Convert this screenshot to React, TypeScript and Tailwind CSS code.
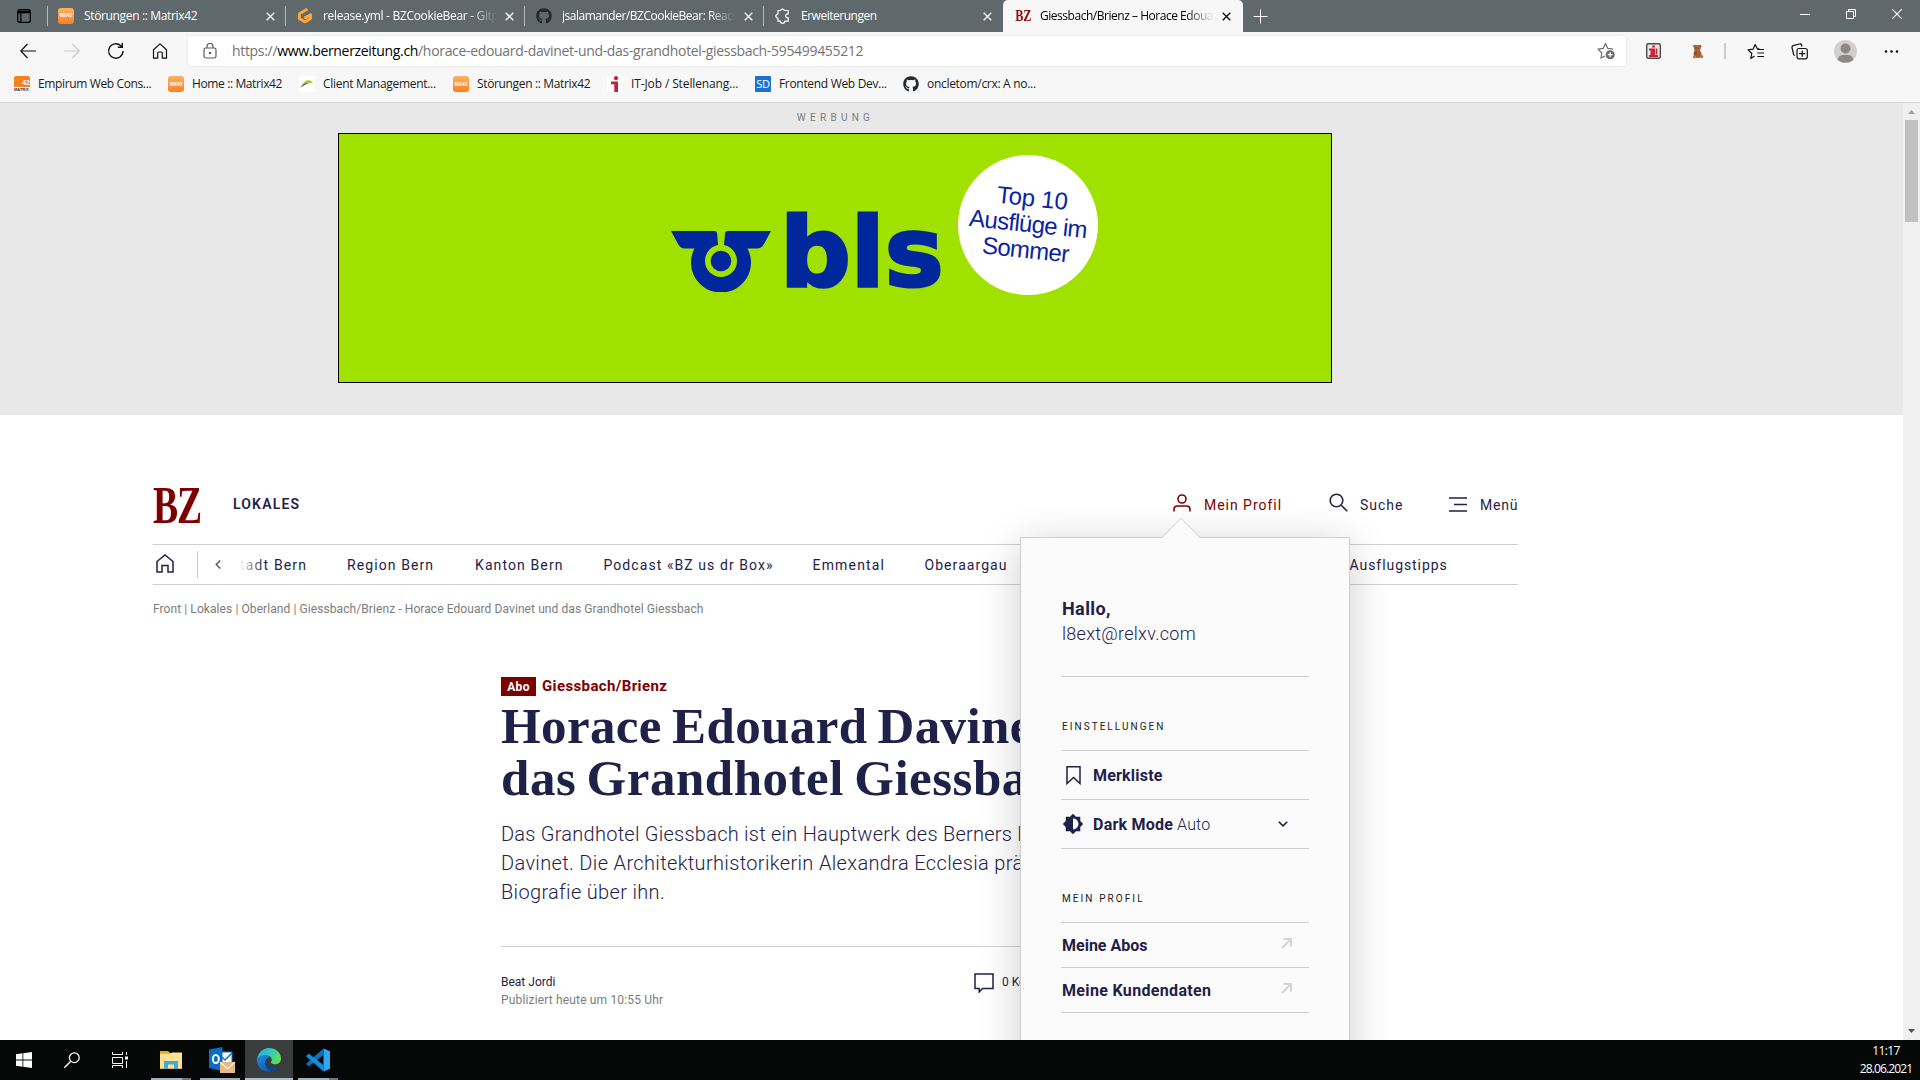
import type { ReactNode } from "react";
import { FaGithub } from "react-icons/fa";

const NAVY = "#1f2149";

/* ---------- small logos ---------- */

function MatrixIcon() {
  return (
    <span className="flex h-4 w-4 shrink-0 items-center justify-center overflow-hidden rounded-[3px] bg-gradient-to-b from-[#fbb161] to-[#f97f1c] font-['Liberation_Sans',sans-serif] text-[5px] font-bold tracking-[-0.1px] text-white">
      MX42
    </span>
  );
}

function EmpirumIcon() {
  return (
    <span className="flex h-4 w-4 shrink-0 flex-col overflow-hidden bg-white font-['Liberation_Sans',sans-serif] font-bold">
      <span className="flex h-[11px] items-end justify-end rounded-t-[2px] bg-[#f58220] text-[7px] leading-[8px] tracking-normal text-white">42</span>
      <span className="text-[4px] leading-[5px] tracking-normal text-[#333]">MATRIX</span>
    </span>
  );
}

function ClientIcon() {
  return (
    <svg className="h-4 w-4 shrink-0" viewBox="0 0 16 16">
      <rect width="16" height="16" fill="#fff" />
      <path d="M3 9.500C4.500 6 7 4 9.500 4.200C12 4.400 13.300 5.700 14 7.500C12 6.800 10 7 8.200 8z" fill="#9bc93c" />
      <path d="M1.500 11.500C3 8.500 6.500 6.800 9 7.300C7 8.200 4.500 9.800 1.500 11.500z" fill="#555" />
    </svg>
  );
}

function RedIIcon() {
  return (
    <svg className="h-4 w-4 shrink-0" viewBox="0 0 16 16">
      <rect width="16" height="16" fill="#fff" />
      <circle cx="9" cy="2.200" r="2.100" fill="#c8203c" />
      <path d="M4 5.500h7V16H7.300V8.200H4z" fill="#c8203c" />
    </svg>
  );
}

function SdIcon() {
  return (
    <span className="flex h-4 w-4 shrink-0 items-center justify-center rounded-[1px] bg-[#1a73d4] font-['Open_Sans',sans-serif] text-[11px] tracking-[-0.3px] text-white">
      SD
    </span>
  );
}

function GitpodIcon() {
  return (
    <svg className="h-4 w-4 shrink-0" viewBox="0 0 16 16" fill="none" stroke="#ffa63b" strokeWidth="3" strokeLinecap="round" strokeLinejoin="round">
      <path d="M9.300 1.800L3.200 5.200Q2.300 5.800 2.300 6.800V9.700Q2.300 10.500 3 11L7.300 13.500Q8 13.900 8.700 13.500L12.800 11Q13.600 10.500 13.600 9.700V6.700L8.400 9.600" />
    </svg>
  );
}

function PuzzleIcon() {
  return (
    <svg className="h-4 w-4 shrink-0" viewBox="0 0 16 16" fill="none" stroke="#fff" strokeWidth="1.200" strokeLinejoin="round">
      <path d="M3 2.500H5.500A2.100 2.100 0 0 1 9.500 2.500H13.200V6A1.950 1.950 0 1 0 13.200 9.700V13.200H9.700A2.100 2.100 0 0 1 5.500 13.200H3V10.200A2.100 2.100 0 0 1 3 6z" />
    </svg>
  );
}

function BzMark({ small }: { small?: boolean }) {
  return small ? (
    <span className="flex h-4 w-4 shrink-0 items-center justify-center">
      <span className="scale-x-[0.72] font-['Liberation_Serif',serif] text-[17px] leading-4 font-bold text-[#8a0d10]">BZ</span>
    </span>
  ) : (
    <span className="flex h-[54px] w-[48px] shrink-0 items-center">
      <span className="origin-left scale-x-[0.710] font-['Liberation_Serif',serif] text-[53px] leading-[54px] font-bold tracking-[-1.500px] text-[#7d0000]">BZ</span>
    </span>
  );
}

function CloseX({ dark }: { dark?: boolean }) {
  return (
    <svg className="h-[9px] w-[9px] shrink-0" viewBox="0 0 9 9" stroke={dark ? "#000" : "#fff"} strokeWidth="1.300">
      <path d="M0.700 0.700L8.300 8.300M8.300 0.700L0.700 8.300" />
    </svg>
  );
}

/* ---------- browser chrome ---------- */

function Tab({ icon, title, track, active, fade }: { icon: ReactNode; title: string; track: string; active?: boolean; fade?: boolean }) {
  return (
    <div
      className={`flex h-8 shrink-0 items-center ${
        active ? "w-[240px] rounded-t-[5px] bg-[#f7f7f7] pr-[12px] pl-[12px] text-black" : "w-[239px] border-l border-transparent pr-[11px] pl-[10px] text-white"
      }`}
    >
      {icon}
      <span
        className={`w-[174px] overflow-hidden text-[12px] leading-4 whitespace-nowrap ${active ? "ml-[9px]" : "ml-[10px]"} ${track} ${
          fade ? "[mask-image:linear-gradient(to_right,#000_84%,transparent)]" : ""
        }`}
      >
        {title}
      </span>
      <span className="ml-auto flex">
        <CloseX dark={active} />
      </span>
    </div>
  );
}

function TabBar() {
  const sep = <span className="-ml-px h-5 w-px shrink-0 bg-[#b4b9bb]" />;
  return (
    <div className="flex h-8 items-center bg-[#5f686b]">
      <div className="flex h-8 w-[47px] shrink-0 items-center justify-center">
        <svg className="h-[14px] w-[14px]" viewBox="0 0 14 14" fill="none" stroke="#000" strokeWidth="1.200">
          <rect x="0.700" y="0.700" width="12.600" height="12.600" rx="2" />
          <path d="M1 3H13" strokeWidth="2.600" />
          <path d="M3.800 3V13" />
        </svg>
      </div>
      <span className="-mr-px h-5 w-px shrink-0 bg-[#b4b9bb]" />
      <Tab icon={<MatrixIcon />} title="Störungen :: Matrix42" track="tracking-[-0.35px]" />
      {sep}
      <Tab icon={<GitpodIcon />} title="release.yml - BZCookieBear - Gitpod" track="tracking-[-0.32px]" fade />
      {sep}
      <Tab icon={<FaGithub className="h-4 w-4 shrink-0 text-[#24292e]" />} title="jsalamander/BZCookieBear: React" track="tracking-[-0.49px]" fade />
      {sep}
      <Tab icon={<PuzzleIcon />} title="Erweiterungen" track="tracking-[-0.49px]" />
      <Tab icon={<BzMark small />} title="Giessbach/Brienz – Horace Edouard" track="tracking-[-0.47px]" active fade />
      <svg className="ml-[10px] h-[15px] w-[15px] shrink-0" viewBox="0 0 15 15" stroke="#fff" strokeWidth="1">
        <path d="M7.500 0.500V14.500M0.500 7.500H14.500" />
      </svg>
      <div className="mr-[18px] mb-1 ml-auto flex items-center gap-[36px]">
        <span className="h-px w-[10px] bg-white" />
        <svg className="h-[10px] w-[10px]" viewBox="0 0 10 10" fill="none" stroke="#fff">
          <path d="M0.500 2.500H7.500V9.500H0.500zM2.500 2.500V0.500H9.500V7.500H7.500" />
        </svg>
        <svg className="h-[10px] w-[10px]" viewBox="0 0 10 10" stroke="#fff" strokeWidth="1.100">
          <path d="M0 0L10 10M10 0L0 10" />
        </svg>
      </div>
    </div>
  );
}

function Toolbar() {
  return (
    <div className="flex h-[38px] shrink-0 items-center">
      <div className="flex w-[188px] items-center pl-5">
        <svg className="h-4 w-4" viewBox="0 0 16 16" fill="none" stroke="#111" strokeWidth="1.200">
          <path d="M7.500 1L0.800 8L7.500 15M0.800 8H16" />
        </svg>
        <svg className="ml-7 h-4 w-4" viewBox="0 0 16 16" fill="none" stroke="#c9c9c9" strokeWidth="1.200">
          <path d="M8.500 1L15.200 8L8.500 15M15.200 8H0" />
        </svg>
        <svg className="ml-[27px] h-[18px] w-[18px]" viewBox="0 0 18 18" fill="none" stroke="#111" strokeWidth="1.400">
          <path d="M16 9A7.200 7.200 0 1 1 13.800 3.800L15 5M15.300 0.800V5.300H10.800" />
        </svg>
        <svg className="ml-[27px] h-4 w-4" viewBox="0 0 16 16" fill="none" stroke="#111" strokeWidth="1.200" strokeLinejoin="round">
          <path d="M1.500 6.800L8 0.900L14.500 6.800V15.200H10.300V10Q10.300 9 9.300 9H6.700Q5.700 9 5.700 10V15.200H1.500z" />
        </svg>
      </div>
      <div className="flex h-[30px] w-[1438px] shrink-0 items-center rounded-[3px] bg-white pr-[11px] pl-[15px] shadow-[0_0_3px_rgba(0,0,0,0.10)]">
        <svg className="h-4 w-[14px] shrink-0" viewBox="0 0 14 16" fill="none" stroke="#5c5c5c" strokeWidth="1.200">
          <rect x="1" y="5" width="12" height="10" rx="1.800" />
          <path d="M4 5V3.500A3 3 0 0 1 10 3.500V5" />
          <circle cx="7" cy="10" r="0.700" fill="#5c5c5c" />
        </svg>
        <span className="mb-px ml-[15px] text-[14px] tracking-[-0.320px] whitespace-nowrap text-[#737373]">
          https://<span className="text-black">www.bernerzeitung.ch</span>/horace-edouard-davinet-und-das-grandhotel-giessbach-595499455212
        </span>
        <svg className="ml-auto h-[18px] w-[18px] shrink-0" viewBox="0 0 18 18" fill="none" stroke="#6b6b6b" strokeWidth="1.200" strokeLinejoin="round">
          <path d="M8 14L4 16L4.800 11L1 7.200L6.200 6.400L8.500 1.500L10.800 6.400L16 7.200" />
          <circle cx="13.200" cy="12.700" r="4.500" fill="#6b6b6b" stroke="none" />
          <path d="M13.200 10.200V15.200M10.700 12.700H15.700" stroke="#fff" strokeWidth="1.300" />
        </svg>
      </div>
      <div className="flex flex-1 items-center pl-5">
        <svg className="h-4 w-[15px]" viewBox="0 0 15 16">
          <rect x="0.700" y="0.700" width="13.600" height="14.600" rx="1.500" fill="#e8e8e8" stroke="#4a4a4a" strokeWidth="1.400" />
          <path d="M6.200 2.500H9V4.500H6.200zM3 5.500H9V12H12V14H3V12H4.500V7.500H3zM9.800 5.500H11.300V11.500H9.800z" fill="#cf2233" />
        </svg>
        <svg className="ml-[31px] h-[15px] w-[12px]" viewBox="0 0 12 15">
          <circle cx="2.800" cy="2.200" r="1.500" fill="#8f5530" />
          <circle cx="7.800" cy="2.200" r="1.500" fill="#8f5530" />
          <circle cx="5.300" cy="4.400" r="3.300" fill="#b06335" />
          <path d="M1.500 9Q2 6 5 6.500Q9.500 6 9.500 10Q9.800 14 6 14Q1.200 14 1.500 9z" fill="#a85c30" />
          <circle cx="4" cy="4" r="0.600" fill="#333" />
          <circle cx="6.800" cy="4" r="0.600" fill="#333" />
          <circle cx="3.600" cy="9" r="1.700" fill="#85581f" />
          <circle cx="2.400" cy="13" r="1.500" fill="#c27a52" />
          <circle cx="9.600" cy="12.600" r="1.700" fill="#b96f48" />
        </svg>
        <span className="ml-[20px] h-4 w-[2px] bg-[#cfcfcf]" />
        <svg className="ml-[21px] h-[17px] w-[17px]" viewBox="0 0 17 17" fill="none" stroke="#111" strokeWidth="1.200" strokeLinejoin="round">
          <path d="M7.500 13L3.800 15.500L4.800 10.500L1 6.800L6 6.200L8.200 1.500L10.300 5.800H12.500M10.300 6.500H17M10.300 10H17M10.300 13.500H17" />
        </svg>
        <svg className="ml-[27px] h-[17px] w-[17px]" viewBox="0 0 17 17" fill="none" stroke="#111" strokeWidth="1.200">
          <path d="M3.800 12.500Q2.800 12.300 2.500 11L1 4.500Q0.700 3 2.200 2.600L8.500 1Q10.200 0.700 10.600 2L11 3.500" />
          <rect x="6" y="5.500" width="10.300" height="10.300" rx="2" />
          <path d="M11.200 7.500V13.800M8 10.700H14.300" />
        </svg>
        <svg className="ml-[26px] h-[23px] w-[23px]" viewBox="0 0 23 23">
          <clipPath id="avatarClip"><circle cx="11.500" cy="11.500" r="11.500" /></clipPath>
          <g clipPath="url(#avatarClip)">
            <rect width="23" height="23" fill="#d2d0ce" />
            <circle cx="11.500" cy="8.500" r="5" fill="#8d8883" />
            <path d="M3.500 20Q4 14.800 11.500 14.800Q19 14.800 19.500 20L15 22.500H8z" fill="#8d8883" />
          </g>
        </svg>
        <svg className="ml-[27px] h-[3px] w-[15px]" viewBox="0 0 15 3" fill="#111">
          <circle cx="2" cy="1.500" r="1.300" /><circle cx="7.500" cy="1.500" r="1.300" /><circle cx="13" cy="1.500" r="1.300" />
        </svg>
      </div>
    </div>
  );
}

function Bookmark({ icon, label, cls }: { icon: ReactNode; label: string; cls: string }) {
  return (
    <div className={`flex shrink-0 items-center gap-2 whitespace-nowrap ${cls}`}>
      {icon}
      {label}
    </div>
  );
}

function Bookmarks() {
  return (
    <div className="flex h-[33px] items-center border-b border-[#d3d3d3] pb-1 pl-[14px] text-[12px] leading-4 text-[#1b1b1b]">
      <Bookmark cls="w-[154px] tracking-[-0.370px]" icon={<EmpirumIcon />} label="Empirum Web Cons..." />
      <Bookmark cls="w-[131px] tracking-[-0.380px]" icon={<MatrixIcon />} label="Home :: Matrix42" />
      <Bookmark cls="w-[154px] tracking-[-0.300px]" icon={<ClientIcon />} label="Client Management..." />
      <Bookmark cls="w-[154px] tracking-[-0.350px]" icon={<MatrixIcon />} label="Störungen :: Matrix42" />
      <Bookmark cls="w-[148px] tracking-[-0.120px]" icon={<RedIIcon />} label="IT-Job / Stellenang..." />
      <Bookmark cls="w-[148px] tracking-[-0.320px]" icon={<SdIcon />} label="Frontend Web Dev..." />
      <Bookmark cls="tracking-[-0.300px]" icon={<FaGithub className="h-4 w-4 text-[#24292e]" />} label="oncletom/crx: A no..." />
    </div>
  );
}

/* ---------- advertisement ---------- */

function Advert() {
  return (
    <div className="flex h-[312px] flex-col bg-[#e8e8e8] pl-[338px]">
      <div className="flex h-[30px] w-[994px] items-center justify-center pr-px pb-px pl-[2px] text-[10px] tracking-[4.270px] text-[#7c7c7c]">WERBUNG</div>
      <div className="relative h-[250px] w-[994px] border border-black bg-[#a1e100]">
        <svg className="absolute top-[97px] left-[332px] h-[61px] w-[102px]" viewBox="0 0 102 61" fill="#00289c">
          <path d="M0 0H43Q46 0 46.200 3L47 14A16 16 0 0 0 34 30A16 16 0 0 0 66 30A16 16 0 0 0 53 14L54 3Q54.200 0 57 0H100L93 13Q90.500 17.500 86 17.500H76.500A30 30 0 1 1 23.500 17.500H14Q9.500 17.500 7 13z" />
          <circle cx="50" cy="30" r="10.300" />
        </svg>
        <span className="absolute top-[60px] left-[441px] origin-left scale-x-[1.030] font-['DejaVu_Sans',sans-serif] text-[96px] leading-[118px] font-bold text-[#00289c] [-webkit-text-stroke:3px_#00289c]">bls</span>
        <div className="absolute top-[21px] left-[619px] flex h-[140px] w-[140px] items-center justify-center rounded-full bg-white">
          <p className="mb-[3px] rotate-[6deg] text-center font-['Liberation_Sans',sans-serif] text-[24px] leading-[26px] tracking-[-0.650px] whitespace-nowrap text-[#0a24a0]">
            <span className="pl-[3px] tracking-[-0.200px]">Top 10</span>
            <br />
            Ausflüge im
            <br />
            Sommer
          </p>
        </div>
      </div>
    </div>
  );
}

/* ---------- site header ---------- */

function SiteHeader() {
  return (
    <div className="ml-[153px] w-[1365px]">
      <div className="flex h-[129px] items-center pt-[50px] text-[14px] text-[#1f2149]">
        <BzMark />
        <span className="ml-[32px] font-semibold tracking-[1.170px]">LOKALES</span>
        <div className="ml-auto flex items-center">
          <svg className="mb-[3px] h-[18px] w-[18px]" viewBox="0 0 18 18" fill="none" stroke="#7d0000" strokeWidth="1.600">
            <circle cx="9" cy="5" r="4" />
            <path d="M1 17.500V15.500Q1 12 4.500 12H13.500Q17 12 17 15.500V17.500" />
          </svg>
          <span className="ml-[13px] w-[125px] pt-px tracking-[0.970px] text-[#7d0000]">Mein Profil</span>
          <svg className="mb-[5px] h-[19px] w-[19px]" viewBox="0 0 19 19" fill="none" stroke={NAVY} strokeWidth="1.600">
            <circle cx="7.500" cy="7.500" r="6.300" />
            <path d="M12 12L18.300 18.300" />
          </svg>
          <span className="ml-[12px] w-[89px] pt-px tracking-[1px]">Suche</span>
          <svg className="h-[15px] w-[18px]" viewBox="0 0 18 15" stroke={NAVY} strokeWidth="1.500">
            <path d="M0 1H18M5 7.500H18M0 14H18" />
          </svg>
          <span className="ml-[13px] w-[38px] pt-px tracking-[0.800px]">Menü</span>
        </div>
      </div>
      <div className="flex h-[41px] items-center overflow-hidden border-y border-[#cfcfcf] text-[14px] whitespace-nowrap text-[#1f2149]">
        <svg className="mb-[3px] ml-[3px] h-[19px] w-[18px] shrink-0" viewBox="0 0 18 19" fill="none" stroke={NAVY} strokeWidth="1.500">
          <path d="M1 7.500L9 1L17 7.500V18H12V11.500H6V18H1z" />
        </svg>
        <span className="ml-[23px] h-[27px] w-px shrink-0 bg-[#cfcfcf]" />
        <svg className="ml-[17px] h-[9px] w-[6px] shrink-0" viewBox="0 0 6 9" fill="none" stroke="#555" strokeWidth="1.400">
          <path d="M5.300 0.500L1.200 4.500L5.300 8.500" />
        </svg>
        <div className="ml-[19px] flex pt-[2px]">
          <span className="w-[107px] shrink-0 tracking-[1.150px]">
            <span className="bg-gradient-to-r from-white to-[#1f2149] bg-clip-text text-transparent">tad</span>t Bern
          </span>
          <span className="w-[128px] shrink-0 tracking-[1.090px]">Region Bern</span>
          <span className="w-[128.500px] shrink-0 tracking-[1.110px]">Kanton Bern</span>
          <span className="w-[209px] shrink-0 tracking-[1.070px]">Podcast «BZ us dr Box»</span>
          <span className="w-[112px] shrink-0 tracking-[1.180px]">Emmental</span>
          <span className="w-[425px] shrink-0 tracking-[1.060px]">Oberaargau</span>
          <span className="shrink-0 tracking-[0.940px]">Ausflugstipps</span>
        </div>
      </div>
      <div className="pt-[16px] text-[12px] leading-4 tracking-[0.083px] text-[#7c7c7c]">
        Front | Lokales | Oberland | Giessbach/Brienz - Horace Edouard Davinet und das Grandhotel Giessbach
      </div>
    </div>
  );
}

function Article() {
  return (
    <div className="ml-[501px] w-[834px] text-[#1f2149]">
      <div className="flex h-[19px] items-stretch">
        <span className="flex w-[35px] items-center justify-center bg-[#7d0000] text-[12px] font-bold tracking-[0.350px] text-white">Abo</span>
        <span className="ml-[6px] text-[15px] leading-[18px] font-bold tracking-[0.380px] text-[#7d0000]">Giessbach/Brienz</span>
      </div>
      <h1 className="mt-[4px] font-['Liberation_Serif',serif] text-[51px] leading-[52px] font-bold whitespace-nowrap">
        <span className="tracking-[0.380px] [word-spacing:-3px]">Horace Edouard Davinet und</span>
        <br />
        <span className="tracking-[0.520px] [word-spacing:-3px]">das Grandhotel Giessbach</span>
      </h1>
      <p className="mt-[16px] text-[20px] leading-[29px] font-light whitespace-nowrap">
        <span className="tracking-[0.250px]">Das Grandhotel Giessbach ist ein Hauptwerk des Berners Horace Edouard</span>
        <br />
        <span className="tracking-[0.350px]">Davinet. Die Architekturhistorikerin Alexandra Ecclesia präsentiert eine</span>
        <br />
        <span className="tracking-[0.330px]">Biografie über ihn.</span>
      </p>
      <div className="mt-[39px] flex border-t border-[#cfcfcf] pt-[26px] text-[12px] leading-[18px]">
        <div className="w-[473px]">
          <p>Beat Jordi</p>
          <p className="tracking-[0.160px] text-[#7c7c7c]">Publiziert heute um 10:55 Uhr</p>
        </div>
        <svg className="h-[20px] w-[20px]" viewBox="0 0 20 20" fill="none" stroke={NAVY} strokeWidth="1.500">
          <path d="M1 1H19V15.500H8.500L5.200 19V15.500H1z" />
        </svg>
        <span className="ml-[8px]">0 Kommentare</span>
      </div>
    </div>
  );
}

/* ---------- profile flyout ---------- */

function LinkArrow() {
  return (
    <svg className="mr-[17px] mb-[3px] ml-auto h-[11px] w-[11px]" viewBox="0 0 11 11" fill="none" stroke="#d3d3d3" strokeWidth="1.900">
      <path d="M1 10L9.500 1.500M2.500 1H10V8.500" />
    </svg>
  );
}

function Flyout() {
  return (
    <div className="absolute top-[434px] left-[1020px] h-[560px] w-[330px] border border-[#cfcfcf] bg-[#fbfbfb] px-[40px] pt-[58px] text-[#1f2149] shadow-[0_8px_40px_rgba(0,0,0,0.2)]">
      <svg className="absolute -top-[21px] left-[140px] h-[22px] w-[40px]" viewBox="0 0 40 22">
        <path d="M0.500 21L20 1.200L39.500 21V22H0.500z" fill="#fbfbfb" />
        <path d="M0.500 21L20 1.200L39.500 21" fill="none" stroke="#cfcfcf" />
      </svg>
      <div className="h-[81px] border-b border-[#cfcfcf] pl-px text-[18px] leading-[25px]">
        <p className="font-bold tracking-[0.410px]">Hallo,</p>
        <p className="font-light tracking-[0.280px]">l8ext@relxv.com</p>
      </div>
      <p className="mt-[42px] h-[32px] border-b border-[#cfcfcf] pl-px text-[10px] leading-[15px] tracking-[2.040px] text-[#1a1a1a]">EINSTELLUNGEN</p>
      <div className="flex h-[49px] items-center border-b border-[#cfcfcf] text-[16px] font-bold">
        <svg className="ml-[5px] h-[19px] w-[15px]" viewBox="0 0 15 19" fill="none" stroke={NAVY} strokeWidth="1.500">
          <path d="M1 0.800H14V17.500L7.500 11.500L1 17.500z" />
        </svg>
        <span className="ml-[12px] pt-[2px] tracking-[0.200px]">Merkliste</span>
      </div>
      <div className="flex h-[49px] items-center border-b border-[#cfcfcf] text-[16px]">
        <svg className="ml-[2px] h-[20px] w-[20px]" viewBox="1 1 22 22" fill={NAVY}>
          <path d="M20 15.310L23.310 12 20 8.690V4h-4.690L12 0.690 8.690 4H4v4.690L0.690 12 4 15.310V20h4.690L12 23.310 15.310 20H20v-4.690zM12 18V6c3.310 0 6 2.690 6 6s-2.690 6-6 6z" />
        </svg>
        <span className="ml-[10px] pt-[2px] font-bold tracking-[0.230px]">Dark Mode</span>
        <span className="ml-[4px] pt-[2px] font-light tracking-[0.110px]">Auto</span>
        <svg className="mr-[21px] ml-auto h-[6px] w-[10px]" viewBox="0 0 10 6" fill="none" stroke={NAVY} strokeWidth="1.600">
          <path d="M0.800 0.700L5 4.900L9.200 0.700" />
        </svg>
      </div>
      <p className="mt-[42px] h-[32px] border-b border-[#cfcfcf] pl-px text-[10px] leading-[15px] tracking-[2.080px] text-[#1a1a1a]">MEIN PROFIL</p>
      <div className="flex h-[45px] items-center border-b border-[#cfcfcf] pl-px text-[16px] font-bold">
        <span className="pt-[2px]">Meine Abos</span>
        <LinkArrow />
      </div>
      <div className="flex h-[45px] items-center border-b border-[#cfcfcf] pl-px text-[16px] font-bold">
        <span className="pt-[2px] tracking-[0.340px]">Meine Kundendaten</span>
        <LinkArrow />
      </div>
    </div>
  );
}

/* ---------- taskbar ---------- */

function ExplorerIcon() {
  return (
    <svg className="h-[20px] w-[24px]" viewBox="0 0 24 20">
      <path d="M1 1H9L11 3H23V19H1z" fill="#f3b73c" />
      <path d="M1 4H11L13 2.500H23V18H1z" fill="#ffe291" />
      <path d="M5 11H19V19H15V14.500H9V19H5z" fill="#3fa9e0" />
      <path d="M1 1H9V3H1z" fill="#f0a818" />
    </svg>
  );
}

function OutlookIcon() {
  return (
    <svg className="h-[28px] w-[27px]" viewBox="0 0 27 28">
      <path d="M12 6H24V19H12z" fill="#f4f8fc" stroke="#1a74c4" />
      <path d="M14 11L17 14L24 7" fill="none" stroke="#1a74c4" strokeWidth="1.500" />
      <path d="M1 3.500L14.500 1V25L1 22z" fill="#0a6cc4" />
      <ellipse cx="7.800" cy="13" rx="3" ry="4" fill="none" stroke="#fff" strokeWidth="1.900" />
      <path d="M12 16H27V27H12z" fill="#e9b87c" />
      <path d="M12 16L19.500 23L27 16" fill="none" stroke="#fff5e6" strokeWidth="1.200" />
    </svg>
  );
}

function EdgeIcon() {
  return (
    <svg className="h-6 w-6" viewBox="0 0 24 24">
      <defs>
        <linearGradient id="edgeTop" x1="0" y1="0.300" x2="1" y2="0.600">
          <stop offset="0" stopColor="#2fa9e6" />
          <stop offset="0.500" stopColor="#33c6c0" />
          <stop offset="1" stopColor="#66e04a" />
        </linearGradient>
        <linearGradient id="edgeLow" x1="0" y1="0" x2="0.700" y2="1">
          <stop offset="0" stopColor="#1e90dd" />
          <stop offset="1" stopColor="#0f56a8" />
        </linearGradient>
      </defs>
      <path d="M0 12C0.500 5 5.500 0 12 0C19 0 24 5 24 10.500C24 14 21.500 16.200 18.500 16.200C15.500 16.200 13.800 15.300 13.800 14.600C13.800 14 14.800 13.500 14.800 11.800C14.800 9.500 12.500 7.500 9 7.500C4.500 7.500 0.800 9.500 0 12z" fill="url(#edgeTop)" />
      <path d="M0 12C0.500 9 4.500 7 8.800 7.300C11 7.500 12.800 8.500 13.800 9.800C11 8.800 8.200 11.500 8.200 14.800C8.200 19 12 22.300 16 23C14.800 23.700 13.500 24 12 24C5 24 0 18.500 0 12z" fill="url(#edgeLow)" />
      <path d="M9.500 11.500C8.500 15.500 11 19.500 16 20C18.700 20.200 20.800 19.300 22.300 18.300C20.500 21.300 18 23.200 15.500 23.600C10 22.500 6.500 17 9.500 11.500z" fill="#0c4590" />
    </svg>
  );
}

function CodeIcon() {
  return (
    <svg className="h-6 w-6" viewBox="0 0 24 24">
      <path d="M17.500 0.500L24 3.300V20.700L17.500 23.500z" fill="#2ea8f2" />
      <path d="M17.500 0.500V7L3 18.300L0.500 16.500Q0 16 0.500 15.200z" fill="#0d6fb8" />
      <path d="M17.500 23.500V17L3 5.700L0.500 7.500Q0 8 0.500 8.800z" fill="#168bd8" />
    </svg>
  );
}

function Taskbar() {
  return (
    <div className="flex h-10 items-stretch bg-[#050807]">
      <div className="flex w-12 items-center justify-center">
        <svg className="h-4 w-4" viewBox="0 0 16 16" fill="#fff">
          <path d="M0 2.200L6.500 1.300V7.500H0zM7.300 1.200L16 0V7.500H7.300zM0 8.400H6.500V14.700L0 13.800zM7.300 8.400H16V16L7.300 14.800z" />
        </svg>
      </div>
      <div className="flex w-12 items-center justify-center">
        <svg className="h-4 w-4" viewBox="0 0 16 16" fill="none" stroke="#fff" strokeWidth="1.200">
          <circle cx="10.300" cy="5.700" r="4.900" />
          <path d="M6.800 9.200L0.300 15.700" strokeWidth="1.400" />
        </svg>
      </div>
      <div className="flex w-12 items-center justify-center">
        <svg className="h-4 w-4" viewBox="0 0 16 16" fill="none" stroke="#fff">
          <path d="M0.500 0V2.500H10.500V0M0.500 5.500H10.500V11.500H0.500zM0.500 16V13.500H10.500V16M14.500 0V3M14.500 9V16" />
          <path d="M13 4.500H16V7.500H13z" fill="#fff" stroke="none" />
        </svg>
      </div>
      <div className="ml-[7px] flex w-10 flex-col">
        <div className="flex h-[38px] items-center justify-center pt-[2px]"><ExplorerIcon /></div>
        <div className="flex h-[2px]"><span className="w-[31px] bg-[#9fb0bd]" /><span className="w-[9px] bg-[#6c7882]" /></div>
      </div>
      <div className="ml-[9px] flex w-10 flex-col">
        <div className="flex h-[38px] items-center justify-center pt-[2px] pl-[3px]"><OutlookIcon /></div>
        <div className="h-[2px] bg-[#9fb0bd]" />
      </div>
      <div className="ml-[5px] flex w-12 flex-col bg-[#3a3d3c]">
        <div className="flex h-[38px] items-center justify-center pt-[2px]"><EdgeIcon /></div>
        <div className="h-[2px] bg-[#a9bccb]" />
      </div>
      <div className="ml-[5px] flex w-10 flex-col">
        <div className="flex h-[38px] items-center justify-center pt-[2px]"><CodeIcon /></div>
        <div className="flex h-[2px]"><span className="w-[31px] bg-[#9fb0bd]" /><span className="w-[9px] bg-[#6c7882]" /></div>
      </div>
      <div className="mr-[6px] ml-auto flex w-[56px] flex-col items-center pt-[2px] text-[12px] leading-[18px] tracking-[-0.850px] text-white">
        <span className="tracking-[-0.600px]">11:17</span>
        <span>28.06.2021</span>
      </div>
    </div>
  );
}

function Scrollbar() {
  return (
    <div className="flex w-[17px] shrink-0 flex-col items-center bg-[#f0f0f0]">
      <svg className="mt-[7px] h-[4px] w-[7px]" viewBox="0 0 7 4" fill="#a3a3a3"><path d="M0 4L3.500 0L7 4z" /></svg>
      <div className="mt-[6px] h-[102px] w-[13px] bg-[#c1c1c1]" />
      <svg className="mt-auto mb-[7px] h-[4px] w-[7px]" viewBox="0 0 7 4" fill="#505050"><path d="M0 0L3.500 4L7 0z" /></svg>
    </div>
  );
}

export default function App() {
  return (
    <div className="flex h-[1080px] w-[1920px] flex-col overflow-hidden bg-white font-['Open_Sans',sans-serif]">
      <div className="h-[103px] shrink-0 bg-[#f7f7f7]">
        <TabBar />
        <Toolbar />
        <Bookmarks />
      </div>
      <div className="flex h-[937px] shrink-0">
        <div className="relative h-[937px] w-[1903px] overflow-hidden font-['Roboto',sans-serif]">
          <Advert />
          <SiteHeader />
          <div className="mt-[60px]">
            <Article />
          </div>
          <Flyout />
        </div>
        <Scrollbar />
      </div>
      <Taskbar />
    </div>
  );
}
